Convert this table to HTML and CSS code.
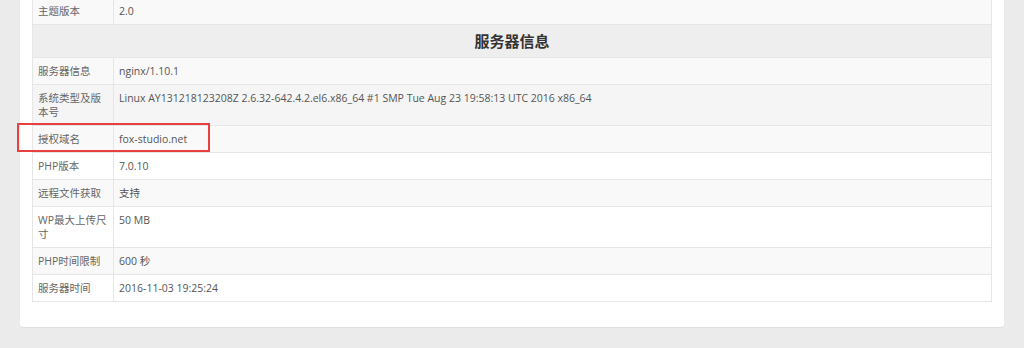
FILE: index.html
```html
<!DOCTYPE html>
<html lang="zh-CN">
<head>
<meta charset="utf-8">
<title>服务器信息</title>
<link rel="stylesheet" href="styles.css">
</head>
<body>
<div class="page">
  <div class="card">
    <table class="info">
      <tbody>
        <tr class="row-alt"><td class="label">主题版本</td><td class="value">2.0</td></tr>
        <tr class="section"><th colspan="2">服务器信息</th></tr>
        <tr class="row-alt"><td class="label">服务器信息</td><td class="value">nginx/1.10.1</td></tr>
        <tr class="row-hover"><td class="label">系统类型及版本号</td><td class="value">Linux AY131218123208Z 2.6.32-642.4.2.el6.x86_64 #1 SMP Tue Aug 23 19:58:13 UTC 2016 x86_64</td></tr>
        <tr class="row-alt"><td class="label marked">授权域名<span class="highlight"></span></td><td class="value">fox-studio.net</td></tr>
        <tr><td class="label">PHP版本</td><td class="value">7.0.10</td></tr>
        <tr class="row-alt"><td class="label">远程文件获取</td><td class="value">支持</td></tr>
        <tr><td class="label">WP最大上传尺寸</td><td class="value">50 MB</td></tr>
        <tr class="row-alt"><td class="label">PHP时间限制</td><td class="value">600 秒</td></tr>
        <tr><td class="label">服务器时间</td><td class="value">2016-11-03 19:25:24</td></tr>
      </tbody>
    </table>
  </div>
</div>
</body>
</html>
```

FILE: styles.css
```css
html, body {
  margin: 0;
  padding: 0;
  background: #ebebeb;
  height: 100%;
  overflow: hidden;
}

body {
  font-family: "Open Sans", "Noto Sans CJK SC", sans-serif;
  font-size: 10.5px;
  color: #555;
}

.page {
  padding: 0 20px 21px;
}

.card {
  background: #fff;
  border-radius: 0 0 3px 3px;
  padding: 0 12px 25px;
  margin-top: -3px;
  box-shadow: 0 1px 1px rgba(0, 0, 0, 0.05);
}

.info {
  width: 100%;
  border-collapse: collapse;
  border: 1px solid #e6e6e6;
}

.info td,
.info th {
  border: 1px solid #e6e6e6;
  padding: 6px 5px;
  line-height: 14px;
  text-align: left;
  vertical-align: top;
}

.info .label {
  width: 70px;
  color: #666;
  position: relative;
}

.info .value {
  color: #555;
}

.row-alt {
  background: #f9f9f9;
}

.row-hover {
  background: #f5f5f5;
}

.section {
  background: #eeeeee;
}

.section th {
  text-align: center;
  font-size: 15px;
  font-weight: bold;
  color: #333;
  line-height: 20px;
  padding: 6px 5px;
}

.highlight {
  position: absolute;
  left: -16px;
  top: -3px;
  width: 189px;
  height: 25px;
  border: 2px solid #e8403f;
  pointer-events: none;
}
```
